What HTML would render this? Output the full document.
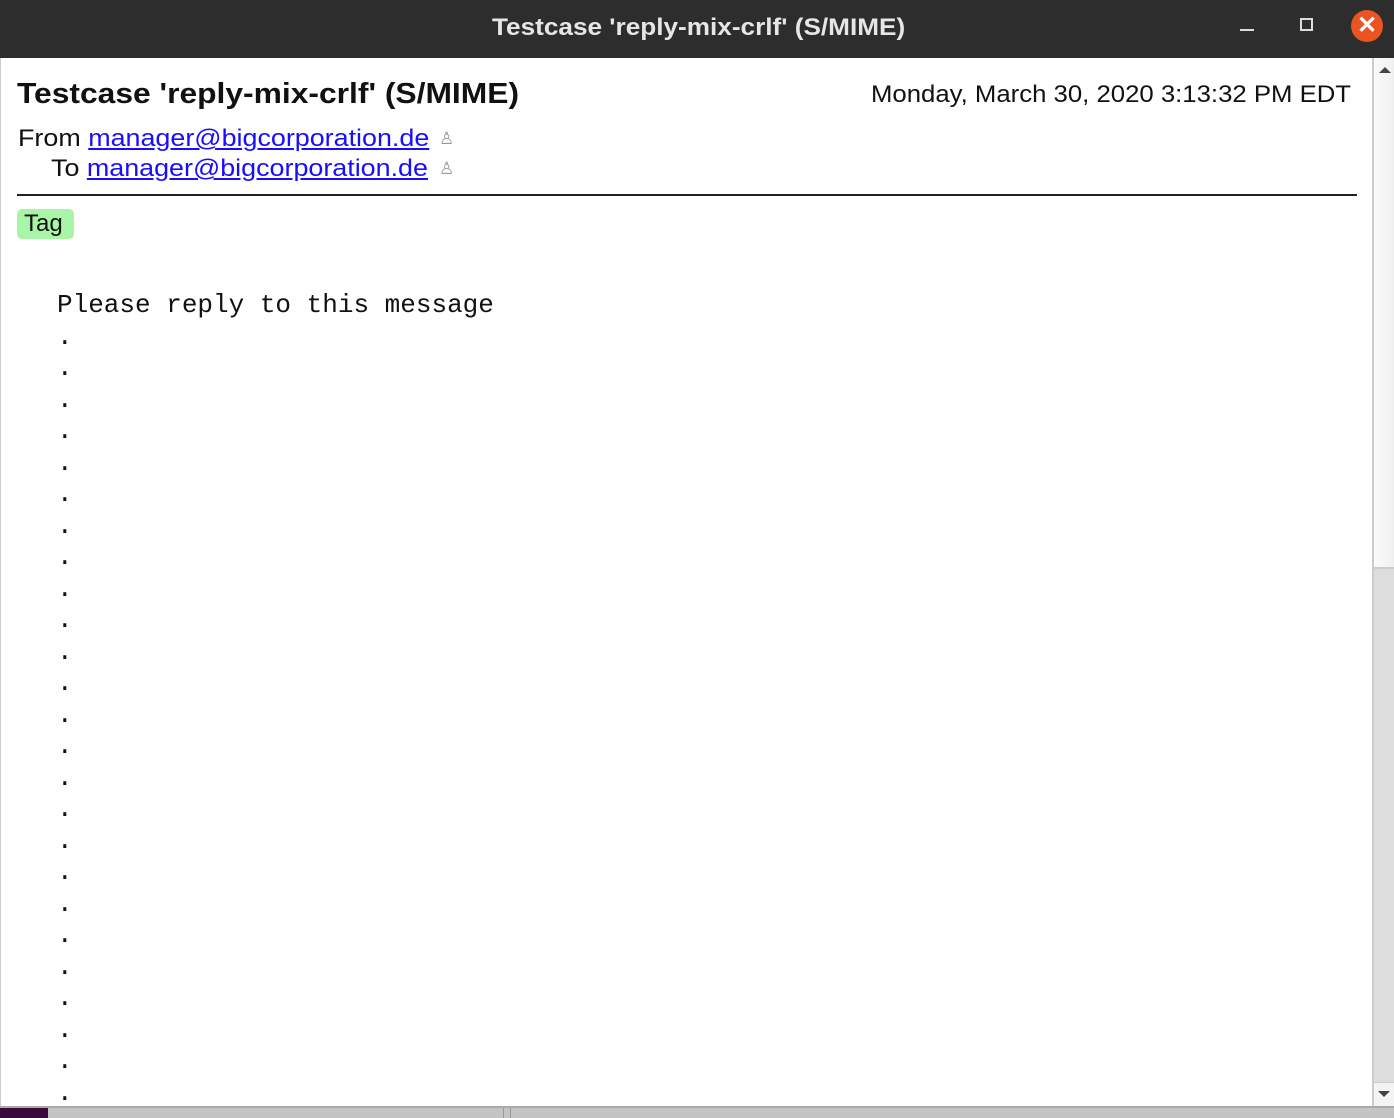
<!DOCTYPE html>
<html><head><style>
*{margin:0;padding:0;box-sizing:border-box}
body{width:1394px;height:1118px;overflow:hidden;background:#fff;font-family:"Liberation Sans",sans-serif;position:relative}
.tb{position:absolute;left:0;top:0;width:1394px;height:58px;background:#2d2d2d}
.content{position:absolute;left:0;top:58px;width:1372px;height:1048px;border-left:1px solid #ccc;overflow:hidden}
.abs{position:absolute;white-space:nowrap;transform-origin:left top}
a{color:#1a0dff;text-decoration:underline}
.sb{position:absolute;left:1372px;top:58px;width:22px;height:1048px;background:#ddd;border-left:2px solid #ccc}
.bot{position:absolute;left:0;top:1106px;width:1394px;height:12px;background:#c4c4c4;border-top:2px solid #aaa}
pre{font-family:"Liberation Mono",monospace;font-size:26px;line-height:31.5px;color:#111;white-space:pre!important}
</style></head><body>
<div class="tb"></div>
<div class="abs" style="left:492px;top:14px;color:#e6e6e6;font-weight:bold;font-size:24px;transform:scaleX(1.09)">Testcase 'reply-mix-crlf' (S/MIME)</div>
<div class="abs" style="left:1240px;top:29px;width:14px;height:2px;background:#ddd"></div>
<div class="abs" style="left:1300px;top:18px;width:13px;height:13px;border:2px solid #ddd"></div>
<div class="abs" style="left:1351px;top:10px;width:32px;height:32px;border-radius:50%;background:#e95420;color:#fff;font-size:24px;line-height:31px;text-align:center;font-weight:bold">✕</div>
<div class="content">
<div class="abs" style="left:16px;top:20px;font-size:29px;font-weight:bold;color:#111;transform:scaleX(1.096)">Testcase 'reply-mix-crlf' (S/MIME)</div>
<div class="abs" style="left:870px;top:23px;font-size:24px;color:#111;transform:scaleX(1.072)">Monday, March 30, 2020 3:13:32 PM EDT</div>
<div class="abs" style="left:17px;top:67px;font-size:24px;color:#111;transform:scaleX(1.12)">From <a>manager@bigcorporation.de</a></div>
<div class="abs" style="left:438px;top:71px;color:#999;font-size:17px">♙</div>
<div class="abs" style="left:50px;top:97px;font-size:24px;color:#111;transform:scaleX(1.12)">To <a>manager@bigcorporation.de</a></div>
<div class="abs" style="left:438px;top:101px;color:#999;font-size:17px">♙</div>
<div class="abs" style="left:16px;top:136px;width:1340px;height:2px;background:#222"></div>
<div class="abs" style="left:16px;top:151px;width:57px;height:30px;background:#a8f5a8;border-radius:5px;font-size:24px;line-height:30px;padding-left:7px;color:#111">Tag</div>
<pre class="abs" style="left:56px;top:232px">Please reply to this message
.
.
.
.
.
.
.
.
.
.
.
.
.
.
.
.
.
.
.
.
.
.
.
.
.</pre>
</div>
<div class="sb">
<div style="position:absolute;left:0;top:0;width:20px;height:511px;background:linear-gradient(90deg,#fafafa,#f0f0f0);border-bottom:2px solid #ccc"></div>
<div style="position:absolute;left:5px;top:9px;width:0;height:0;border-left:6px solid transparent;border-right:6px solid transparent;border-bottom:6px solid #444"></div>
<div style="position:absolute;left:0;top:1024px;width:20px;height:24px;background:#f4f4f4;border-top:1px solid #ccc"></div>
<div style="position:absolute;left:4px;top:1033px;width:0;height:0;border-left:6px solid transparent;border-right:6px solid transparent;border-top:6px solid #444"></div>
</div>
<div class="bot"><div style="position:absolute;left:0;top:0;width:48px;height:10px;background:#3a0a3a"></div><div style="position:absolute;left:503px;top:0;width:8px;height:10px;border-left:1px solid #999;border-right:1px solid #999"></div></div>
</body></html>
